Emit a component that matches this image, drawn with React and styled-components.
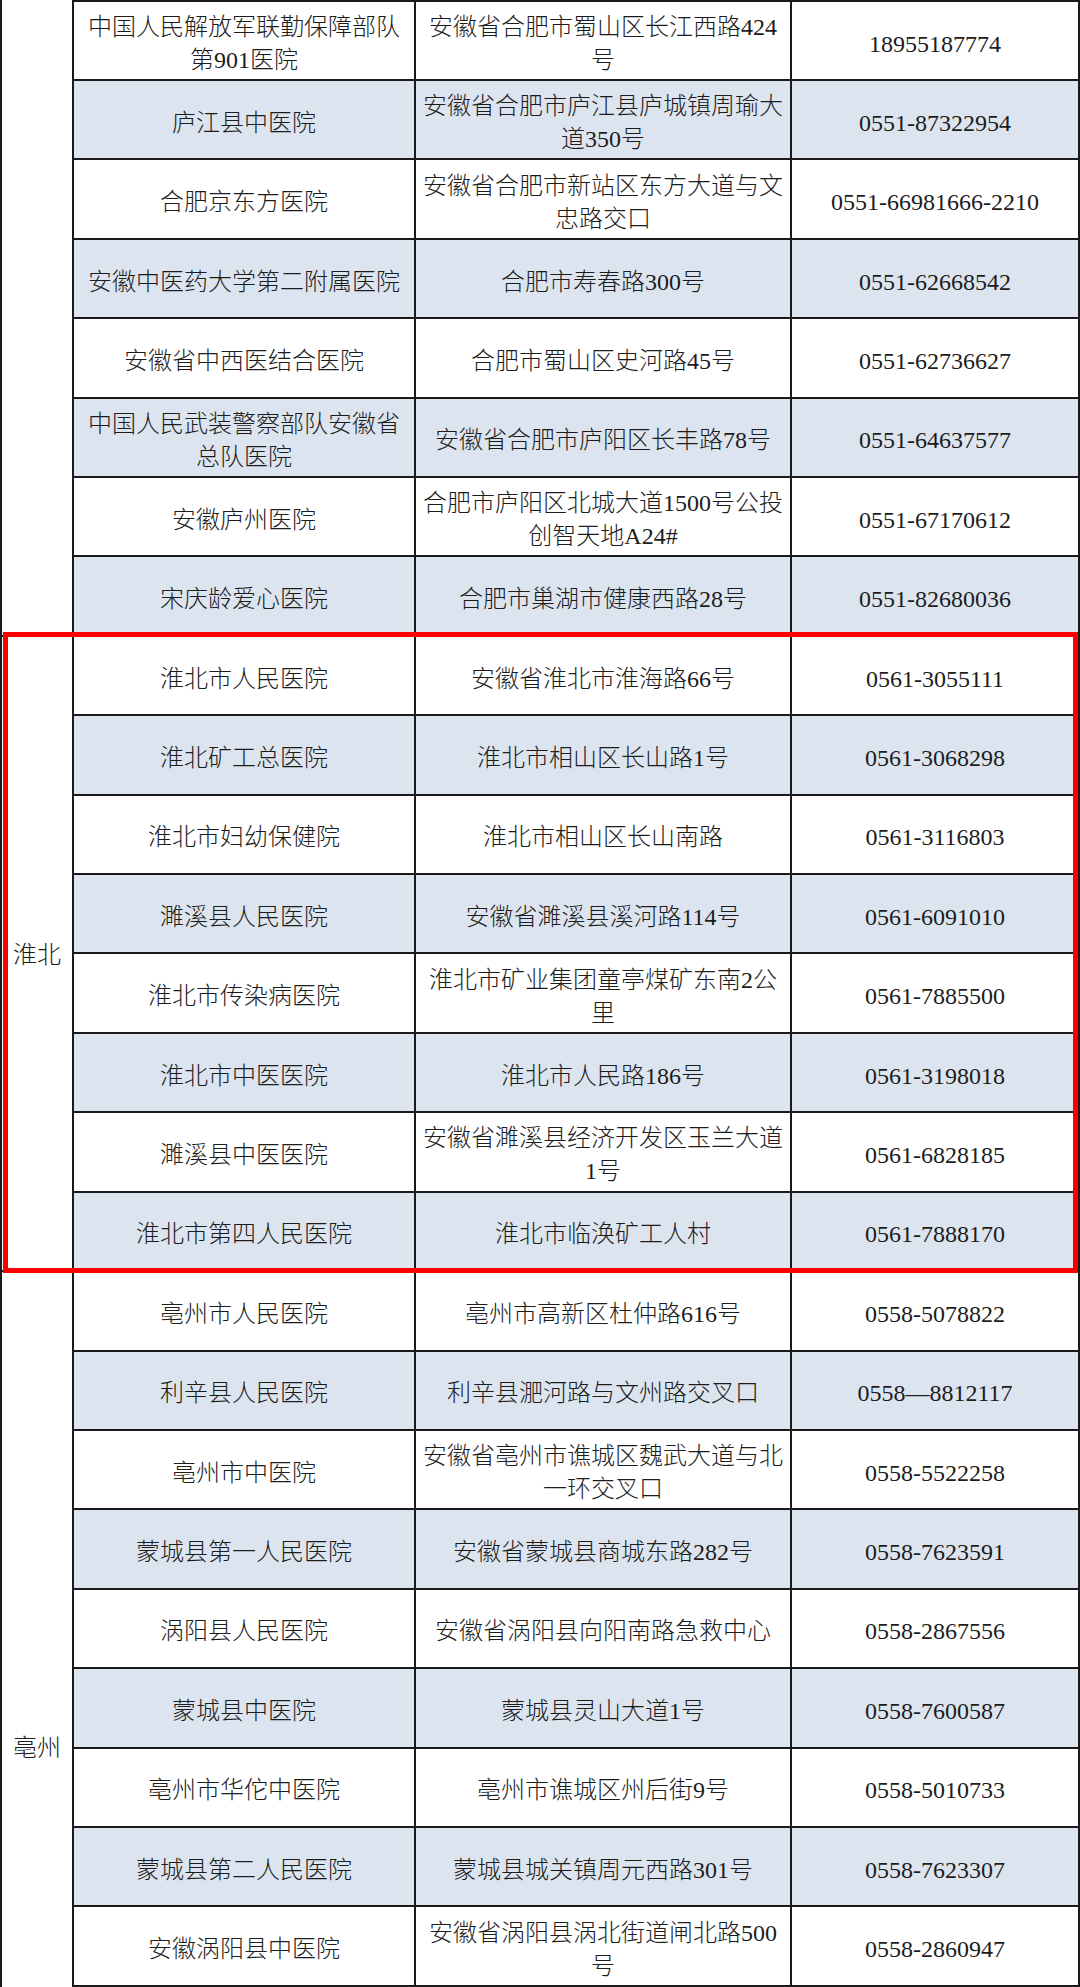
import React from 'react';
import styled, { createGlobalStyle } from 'styled-components';

const GlobalStyle = createGlobalStyle`
  html, body {
    margin: 0;
    padding: 0;
    background: #fff;
  }
`;

const groups = [
  {
    city: '',
    rows: [
      ['中国人民解放军联勤保障部队\n第901医院', '安徽省合肥市蜀山区长江西路424\n号', '18955187774'],
      ['庐江县中医院', '安徽省合肥市庐江县庐城镇周瑜大\n道350号', '0551-87322954'],
      ['合肥京东方医院', '安徽省合肥市新站区东方大道与文\n忠路交口', '0551-66981666-2210'],
      ['安徽中医药大学第二附属医院', '合肥市寿春路300号', '0551-62668542'],
      ['安徽省中西医结合医院', '合肥市蜀山区史河路45号', '0551-62736627'],
      ['中国人民武装警察部队安徽省\n总队医院', '安徽省合肥市庐阳区长丰路78号', '0551-64637577'],
      ['安徽庐州医院', '合肥市庐阳区北城大道1500号公投\n创智天地A24#', '0551-67170612'],
      ['宋庆龄爱心医院', '合肥市巢湖市健康西路28号', '0551-82680036'],
    ],
  },
  {
    city: '淮北',
    rows: [
      ['淮北市人民医院', '安徽省淮北市淮海路66号', '0561-3055111'],
      ['淮北矿工总医院', '淮北市相山区长山路1号', '0561-3068298'],
      ['淮北市妇幼保健院', '淮北市相山区长山南路', '0561-3116803'],
      ['濉溪县人民医院', '安徽省濉溪县溪河路114号', '0561-6091010'],
      ['淮北市传染病医院', '淮北市矿业集团童亭煤矿东南2公\n里', '0561-7885500'],
      ['淮北市中医医院', '淮北市人民路186号', '0561-3198018'],
      ['濉溪县中医医院', '安徽省濉溪县经济开发区玉兰大道\n1号', '0561-6828185'],
      ['淮北市第四人民医院', '淮北市临涣矿工人村', '0561-7888170'],
    ],
  },
  {
    city: '亳州',
    openBottom: true,
    labelOffset: 460,
    rows: [
      ['亳州市人民医院', '亳州市高新区杜仲路616号', '0558-5078822'],
      ['利辛县人民医院', '利辛县淝河路与文州路交叉口', '0558—8812117'],
      ['亳州市中医院', '安徽省亳州市谯城区魏武大道与北\n一环交叉口', '0558-5522258'],
      ['蒙城县第一人民医院', '安徽省蒙城县商城东路282号', '0558-7623591'],
      ['涡阳县人民医院', '安徽省涡阳县向阳南路急救中心', '0558-2867556'],
      ['蒙城县中医院', '蒙城县灵山大道1号', '0558-7600587'],
      ['亳州市华佗中医院', '亳州市谯城区州后街9号', '0558-5010733'],
      ['蒙城县第二人民医院', '蒙城县城关镇周元西路301号', '0558-7623307'],
      ['安徽涡阳县中医院', '安徽省涡阳县涡北街道闸北路500\n号', '0558-2860947'],
    ],
  },
];

const Page = styled.div`
  position: relative;
  width: 1080px;
  height: 1987px;
  overflow: hidden;
  font-family: 'Liberation Serif', 'Noto Sans CJK SC', serif;
  font-weight: 300;
  color: #1c1c1c;
`;

const Grid = styled.div`
  display: grid;
  grid-template-columns: 74px 342px 376px 288px;
  grid-template-rows: 81px repeat(24, 79.42px);
`;

const Cell = styled.div`
  box-sizing: border-box;
  display: flex;
  align-items: center;
  justify-content: center;
  padding: 7px 2px 0;
  text-align: center;
  white-space: pre-line;
  font-size: 24px;
  line-height: 33px;
  border-right: 2px solid #1a1a1a;
  border-bottom: 2px solid #1a1a1a;
  border-top: ${(p) => (p.$first ? '2px solid #1a1a1a' : 'none')};
  background: ${(p) => (p.$shaded ? '#dce5ef' : '#fff')};
`;

const CityCell = styled.div`
  box-sizing: border-box;
  grid-row: span ${(p) => p.$span};
  display: flex;
  align-items: ${(p) => (p.$offset ? 'flex-start' : 'center')};
  justify-content: center;
  padding-top: ${(p) => (p.$offset ? `${p.$offset}px` : '5px')};
  font-size: 24px;
  line-height: 33px;
  border-left: 2px solid #1a1a1a;
  border-right: 2px solid #1a1a1a;
  border-bottom: ${(p) => (p.$openBottom ? 'none' : '2px solid #1a1a1a')};
  background: #fff;
`;

const Highlight = styled.div`
  position: absolute;
  left: 3px;
  top: 632px;
  width: 1075px;
  height: 641px;
  box-sizing: border-box;
  border: 5px solid #fb0000;
  pointer-events: none;
`;

export default function App() {
  let index = 0;

  return (
    <Page>
      <GlobalStyle />
      <Grid>
        {groups.map((group, g) => (
          <React.Fragment key={g}>
            <CityCell
              $span={group.rows.length}
              $offset={group.labelOffset}
              $openBottom={group.openBottom}
            >
              {group.city}
            </CityCell>
            {group.rows.map((row, r) => {
              index += 1;
              const shaded = index % 2 === 0;
              const first = index === 1;
              return row.map((text, c) => (
                <Cell key={`${g}-${r}-${c}`} $shaded={shaded} $first={first}>
                  {text}
                </Cell>
              ));
            })}
          </React.Fragment>
        ))}
      </Grid>
      <Highlight />
    </Page>
  );
}
